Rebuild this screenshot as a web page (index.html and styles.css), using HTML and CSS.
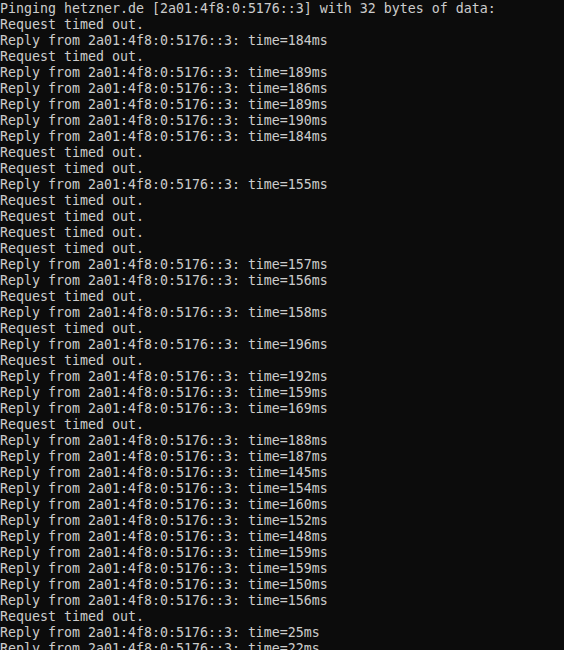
FILE: index.html
```html
<!DOCTYPE html>
<html>
<head>
<meta charset="utf-8">
<link rel="stylesheet" href="styles.css">
</head>
<body>
<pre class="console">Pinging hetzner.de [2a01:4f8:0:5176::3] with 32 bytes of data:
Request timed out.
Reply from 2a01:4f8:0:5176::3: time=184ms
Request timed out.
Reply from 2a01:4f8:0:5176::3: time=189ms
Reply from 2a01:4f8:0:5176::3: time=186ms
Reply from 2a01:4f8:0:5176::3: time=189ms
Reply from 2a01:4f8:0:5176::3: time=190ms
Reply from 2a01:4f8:0:5176::3: time=184ms
Request timed out.
Request timed out.
Reply from 2a01:4f8:0:5176::3: time=155ms
Request timed out.
Request timed out.
Request timed out.
Request timed out.
Reply from 2a01:4f8:0:5176::3: time=157ms
Reply from 2a01:4f8:0:5176::3: time=156ms
Request timed out.
Reply from 2a01:4f8:0:5176::3: time=158ms
Request timed out.
Reply from 2a01:4f8:0:5176::3: time=196ms
Request timed out.
Reply from 2a01:4f8:0:5176::3: time=192ms
Reply from 2a01:4f8:0:5176::3: time=159ms
Reply from 2a01:4f8:0:5176::3: time=169ms
Request timed out.
Reply from 2a01:4f8:0:5176::3: time=188ms
Reply from 2a01:4f8:0:5176::3: time=187ms
Reply from 2a01:4f8:0:5176::3: time=145ms
Reply from 2a01:4f8:0:5176::3: time=154ms
Reply from 2a01:4f8:0:5176::3: time=160ms
Reply from 2a01:4f8:0:5176::3: time=152ms
Reply from 2a01:4f8:0:5176::3: time=148ms
Reply from 2a01:4f8:0:5176::3: time=159ms
Reply from 2a01:4f8:0:5176::3: time=159ms
Reply from 2a01:4f8:0:5176::3: time=150ms
Reply from 2a01:4f8:0:5176::3: time=156ms
Request timed out.
Reply from 2a01:4f8:0:5176::3: time=25ms
Reply from 2a01:4f8:0:5176::3: time=22ms</pre>
</body>
</html>
```
FILE: styles.css
```css
html, body {
  margin: 0;
  padding: 0;
  background: #0c0c0c;
  overflow: hidden;
}
.console {
  margin: 0;
  padding: 1px 0 0 0;
  color: #cccccc;
  font-family: "DejaVu Sans Mono", "Liberation Mono", monospace;
  font-size: 13.29px;
  line-height: 16px;
  white-space: pre;
}
```
